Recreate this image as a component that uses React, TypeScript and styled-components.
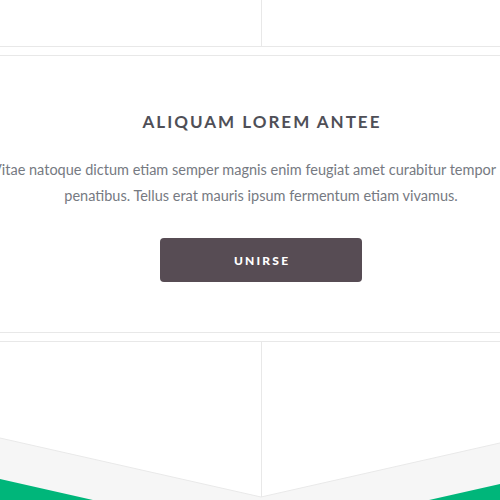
import * as React from "react";
import styled, { createGlobalStyle } from "styled-components";

const GlobalStyle = createGlobalStyle`
  html, body {
    margin: 0;
    padding: 0;
    background: #fff;
    overflow: hidden;
  }
  body {
    font-family: Lato, "Noto Sans", sans-serif;
  }
`;

const Page = styled.div`
  width: 522px;
  display: flex;
  flex-direction: column;
  gap: 8px;
`;

const Columns = styled.section<{ $height: number; $edge: "top" | "bottom" }>`
  position: relative;
  display: grid;
  grid-template-columns: 261px 1fr;
  height: ${(p) => p.$height}px;
  border-${(p) => p.$edge}: 1px solid #e8e8e8;
  overflow: hidden;
`;

const Column = styled.div<{ $divider?: boolean }>`
  border-left: ${(p) => (p.$divider ? "1px solid #e8e8e8" : "none")};
`;

const Card = styled.section`
  display: flex;
  flex-direction: column;
  align-items: center;
  padding: 56px 0 50px;
  border-top: 1px solid #e8e8e8;
  border-bottom: 1px solid #e8e8e8;
`;

const Title = styled.h2`
  margin: 0 0 25px;
  font-size: 17px;
  line-height: 20px;
  font-weight: 700;
  letter-spacing: 2px;
  text-indent: 2px;
  color: #4f4f57;
  text-transform: uppercase;
`;

const Text = styled.p`
  margin: 0 0 29px;
  width: 100%;
  font-size: 14.5px;
  line-height: 26px;
  color: #767a82;
  text-align: center;
  white-space: nowrap;
`;

const Line = styled.span<{ $bleed?: number }>`
  display: block;
  margin-left: ${(p) => -(p.$bleed ?? 0)}px;
`;

const Button = styled.button`
  width: 202px;
  height: 44px;
  border: none;
  border-radius: 4px;
  background: #574c54;
  color: #fff;
  font-family: inherit;
  font-size: 12px;
  font-weight: 900;
  letter-spacing: 2.2px;
  text-indent: 2.2px;
  text-transform: uppercase;
  cursor: pointer;
`;

const Chevron = styled.svg`
  position: absolute;
  left: 0;
  bottom: 0;
  width: 522px;
  height: 80px;
  display: block;
`;

export default function App() {
  return (
    <>
      <GlobalStyle />
      <Page>
        <Columns $height={46} $edge="bottom">
          <Column />
          <Column $divider />
        </Columns>

        <Card>
          <Title>Aliquam lorem antee</Title>
          <Text>
            <Line $bleed={34}>
              Vitae natoque dictum etiam semper magnis enim feugiat amet curabitur tempor
            </Line>
            <Line>penatibus. Tellus erat mauris ipsum fermentum etiam vivamus.</Line>
          </Text>
          <Button>Unirse</Button>
        </Card>

        <Columns $height={158} $edge="top">
          <Column />
          <Column $divider />
          <Chevron viewBox="0 420 522 80" preserveAspectRatio="none">
            <polygon points="0,438 261,497 522,438 522,500 0,500" fill="#f6f6f6" />
            <polyline points="0,438 261,497 522,438" fill="none" stroke="#e9e9e9" strokeWidth="1" />
            <polygon points="0,479 261,538 522,479 522,560 0,560" fill="#00b67a" />
          </Chevron>
        </Columns>
      </Page>
    </>
  );
}
